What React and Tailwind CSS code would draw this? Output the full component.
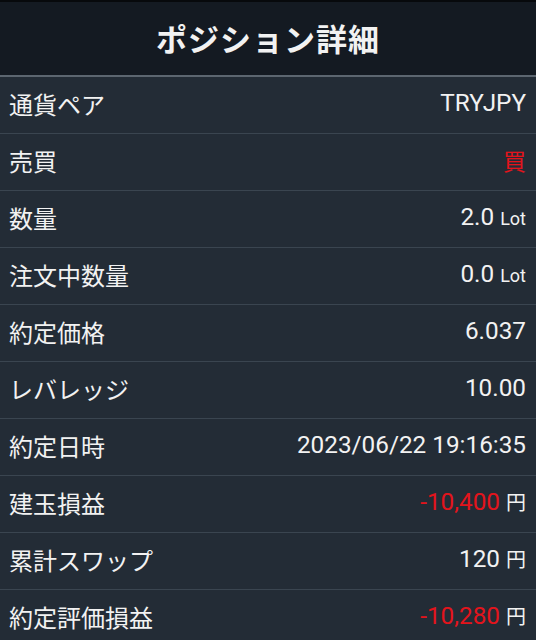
import React from 'react';

const rows = [
    { label: '通貨ペア', value: 'TRYJPY' },
    { label: '売買', value: '買', red: true, cjk: true },
    { label: '数量', value: '2.0', unit: 'Lot' },
    { label: '注文中数量', value: '0.0', unit: 'Lot' },
    { label: '約定価格', value: '6.037' },
    { label: 'レバレッジ', value: '10.00' },
    { label: '約定日時', value: '2023/06/22 19:16:35' },
    { label: '建玉損益', value: '-10,400', unit: '円', red: true },
    { label: '累計スワップ', value: '120', unit: '円' },
    { label: '約定評価損益', value: '-10,280', unit: '円', red: true },
];

const jp = { fontFamily: '"Noto Sans CJK JP", "Noto Sans", sans-serif' };
const num = { fontFamily: 'Roboto, "Noto Sans CJK JP", sans-serif' };

function App() {
    return (
        <div className="w-[536px] h-[640px] overflow-hidden bg-[#232c36] text-[#f2f2f2]">
            <div className="h-[2px] bg-[#07090c]"></div>
            <div className="h-[73px] bg-[#141a22] flex items-center justify-center">
                <h1 className="text-[31px] font-semibold leading-none tracking-[1px] pb-[2px]" style={jp}>
                    ポジション詳細
                </h1>
            </div>
            <div className="h-[2px] bg-[#5c6670]"></div>
            {rows.map((row) => (
                <div
                    key={row.label}
                    className="h-[57px] flex items-center justify-between pl-[9px] pr-[10px] border-b border-[#3a4550]"
                >
                    <span className="text-[24px] leading-none pb-[3px]" style={jp}>
                        {row.label}
                    </span>
                    <span className="flex items-baseline pb-[3px]">
                        <span
                            className={`leading-none ${row.cjk ? 'text-[23px]' : 'text-[24.3px]'} ${row.red ? 'text-[#e3141c]' : ''}`}
                            style={row.cjk ? jp : num}
                        >
                            {row.value}
                        </span>
                        {row.unit === 'Lot' && (
                            <span className="text-[18px] leading-none ml-[6px]" style={num}>
                                Lot
                            </span>
                        )}
                        {row.unit === '円' && (
                            <span className="text-[20px] leading-none ml-[6px]" style={jp}>
                                円
                            </span>
                        )}
                    </span>
                </div>
            ))}
        </div>
    );
}

export default App;
